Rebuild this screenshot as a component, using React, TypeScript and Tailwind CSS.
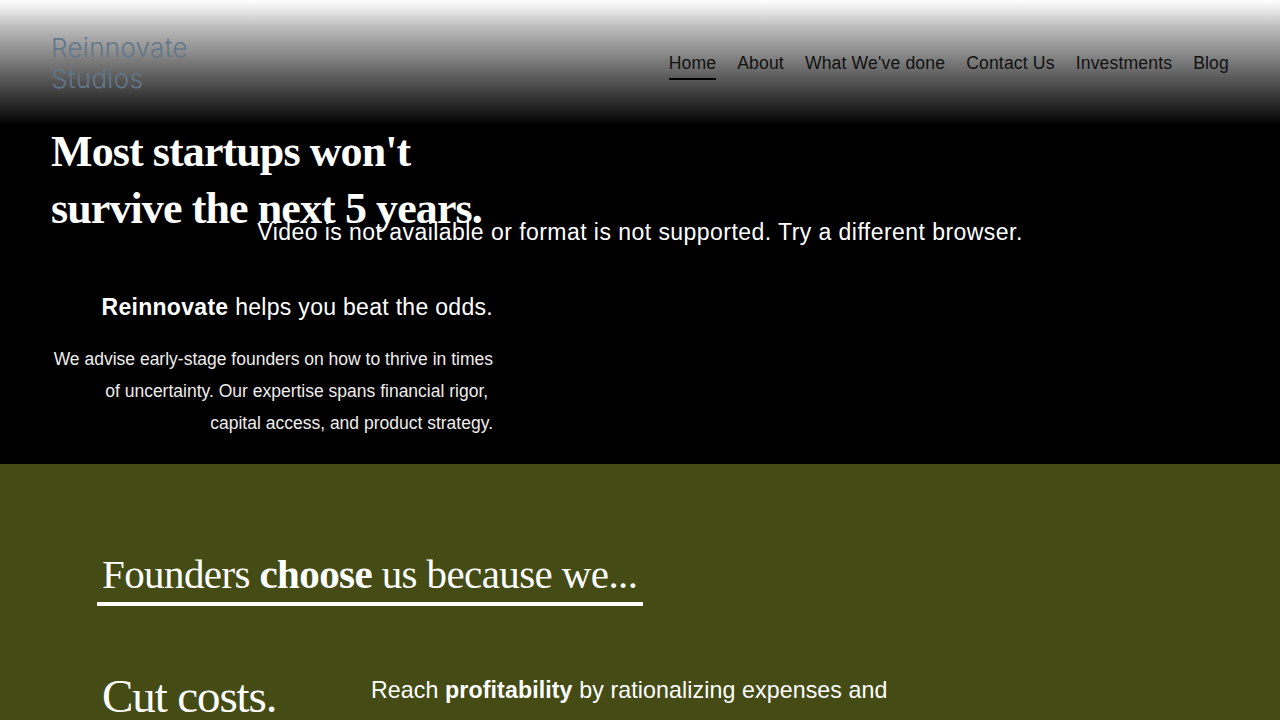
import React from "react";

const serif = { fontFamily: '"Liberation Serif", "DejaVu Serif", serif' };

export default function App() {
  return (
    <div className="w-full min-h-screen bg-[#444b15]" style={{ fontFamily: '"Liberation Sans", Arial, sans-serif' }}>
      <section className="relative h-[464px] bg-black overflow-hidden">
        <div className="absolute inset-0 flex items-center justify-center">
          <p className="text-white text-[23px] tracking-[0.45px] pt-[1px]">
            Video is not available or format is not supported. Try a different browser.
          </p>
        </div>
        <header className="relative h-[125px] bg-[linear-gradient(to_bottom,#ffffff_0%,#bcbcbc_22%,#000000_100%)] flex items-start justify-between px-[51px] pt-[32px]">
          <div className="text-[26px] leading-[31px] text-[#62778a] tracking-[0.3px]" style={{ fontFamily: 'Inter, "Liberation Sans", sans-serif', fontWeight: 300 }}>
            <div>Reinnovate</div>
            <div>Studios</div>
          </div>
          <nav className="flex items-start gap-[21px] pt-[20px] text-[17.6px] text-[#111] tracking-[0.15px]">
            <a className="border-b-2 border-black pb-[4px] leading-[22px]">Home</a>
            <a className="leading-[22px]">About</a>
            <a className="leading-[22px]">What We've done</a>
            <a className="leading-[22px]">Contact Us</a>
            <a className="leading-[22px]">Investments</a>
            <a className="leading-[22px]">Blog</a>
          </nav>
        </header>
        <div className="relative pl-[51px] w-[493px]">
          <h1 className="text-white text-[44px] leading-[57px] font-bold tracking-[-0.9px] -mt-[2px]" style={serif}>
            Most startups won't<br />survive the next 5 years.
          </h1>
          <p className="mt-[55px] text-right text-white text-[23px] leading-[30px] tracking-[0.3px]">
            <span className="font-bold">Reinnovate</span> helps you beat the odds.
          </p>
          <p className="mt-[21px] text-right text-[#eeeeee] text-[17.5px] leading-[32px] tracking-[0px]">
            We advise early-stage founders on how to thrive in times<br />
            of uncertainty. Our expertise spans financial rigor,&nbsp;<br />
            capital access, and product strategy.
          </p>
        </div>
      </section>
      <section className="bg-[#444b15] px-[97px] pt-[84px] pb-[40px]">
        <div className="inline-block border-b-4 border-white pl-[5px] pr-[6px] pb-[2px]">
          <h2 className="text-white text-[41px] leading-[52px] font-normal tracking-[-0.6px]" style={serif}>
            Founders <span className="font-bold">choose</span> us because we...
          </h2>
        </div>
        <div className="flex items-start mt-[62px] pl-[5px]">
          <h3 className="w-[269px] text-white text-[47px] leading-[56px] tracking-[-1.1px]" style={serif}>
            Cut costs.
          </h3>
          <p className="text-white text-[23.2px] leading-[30px] pt-[7px] tracking-[0.1px]">
            Reach <span className="font-bold">profitability</span> by rationalizing expenses and
          </p>
        </div>
      </section>
    </div>
  );
}
